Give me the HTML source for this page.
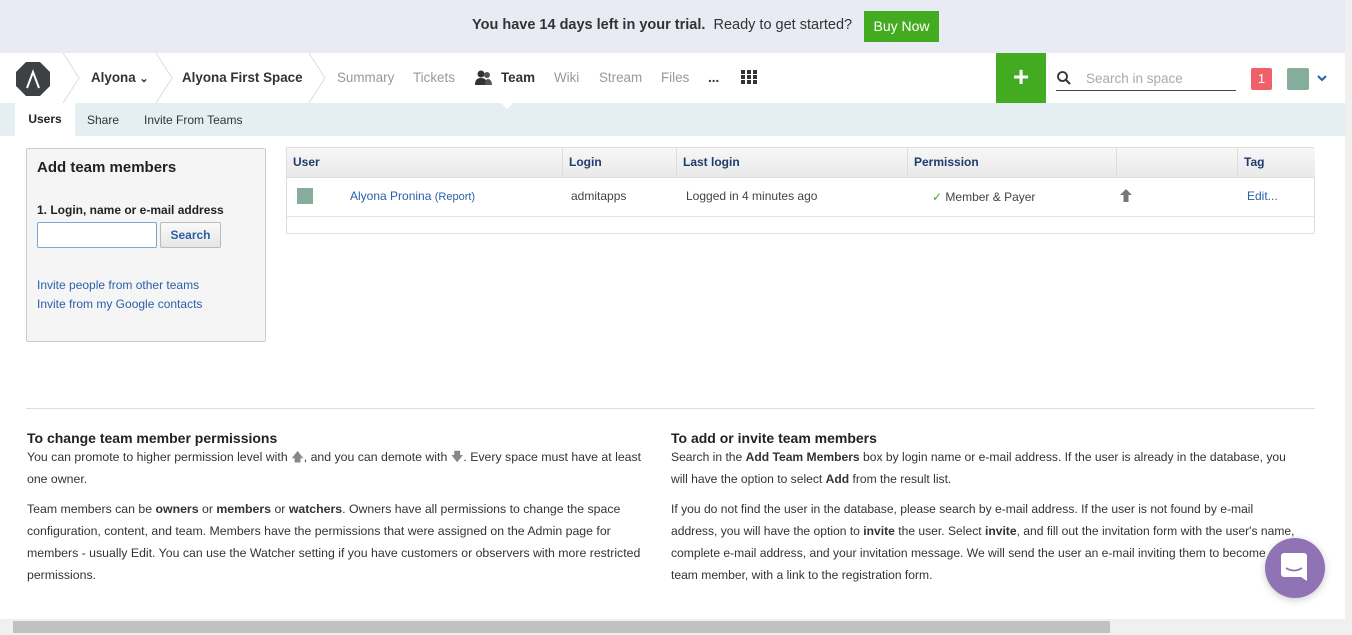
<!DOCTYPE html>
<html><head><meta charset="utf-8"><style>
*{box-sizing:border-box;margin:0;padding:0}
body{width:1352px;height:635px;overflow:hidden;font-family:"Liberation Sans",Arial,sans-serif;background:#fff;position:relative;color:#333}
.abs{position:absolute}
.trial{left:0;top:0;width:1345px;height:53px;background:#e8eaf4;font-size:14.5px;color:#333}
.nav{left:0;top:53px;width:1345px;height:50px;background:#fff}
.sub{left:0;top:103px;width:1345px;height:33px;background:#e5eef0}
.navlink{position:absolute;top:17px;font-size:13.4px;color:#999}
a{color:#2a5fa8;text-decoration:none}
.box{left:26px;top:148px;width:240px;height:194px;background:#f5f5f5;border:1px solid #ccc;border-radius:2px}
.tbl{left:286px;top:147px;width:1029px;height:87px;border:1px solid #ddd;border-radius:2px}
.th{position:absolute;top:0;height:29px;background:linear-gradient(#f7f7f7,#e9e9e9);border-right:1px solid #ddd;font-size:12px;font-weight:bold;color:#1e3c6e;padding:7px 6px}
.td{position:absolute;top:41px;font-size:12px;color:#444}
.p{font-size:12.3px;line-height:22px;color:#333}
.r .p{font-size:12.1px}
h3{font-size:14px;color:#222}
</style></head><body>
<div class="abs trial">
<div class="abs" style="left:472px;top:17px"><b>You have 14 days left in your trial.</b>&nbsp; Ready to get started?</div>
<div class="abs" style="left:864px;top:11px;width:75px;height:31px;background:#43ab1f;color:#fff;font-size:14px;text-align:center;line-height:31px">Buy Now</div>
</div>
<div class="abs nav">
<svg class="abs" style="left:15px;top:8px" width="36" height="36" viewBox="0 0 36 36"><path d="M11 1h14l10 10v14l-10 10H11L1 25V11z" fill="#3e4143"/><path d="M12 27L18 11l6 16" stroke="#fff" stroke-width="2" fill="none"/></svg>
<svg class="abs" style="left:62px;top:0" width="20" height="50"><path d="M1 0l16 25L1 50" stroke="#ddd" fill="none"/></svg>
<div class="navlink" style="left:91px;color:#333;font-weight:bold">Alyona <span style="font-size:11px">&#8964;</span></div>
<svg class="abs" style="left:155px;top:0" width="20" height="50"><path d="M1 0l16 25L1 50" stroke="#ddd" fill="none"/></svg>
<div class="navlink" style="left:182px;color:#333;font-weight:bold">Alyona First Space</div>
<svg class="abs" style="left:308px;top:0" width="20" height="50"><path d="M1 0l16 25L1 50" stroke="#ddd" fill="none"/></svg>
<div class="navlink" style="left:337px">Summary</div>
<div class="navlink" style="left:413px">Tickets</div>
<svg class="abs" style="left:475px;top:17px" width="18" height="16" viewBox="0 0 18 16"><circle cx="6" cy="4" r="3.5" fill="#333"/><path d="M0 15c0-5 2-7 6-7s6 2 6 7z" fill="#333"/><circle cx="12" cy="5" r="3" fill="#555"/><path d="M10 15c0-4 1-6 3-6s4 2 4 6z" fill="#555"/></svg>
<div class="navlink" style="left:501px;color:#333;font-weight:bold">Team</div>
<div class="navlink" style="left:554px">Wiki</div>
<div class="navlink" style="left:599px">Stream</div>
<div class="navlink" style="left:661px">Files</div>
<div class="navlink" style="left:708px;color:#333;font-weight:bold">...</div>
<svg class="abs" style="left:741px;top:17px" width="16" height="14"><g fill="#333"><rect x="0" y="0" width="4" height="4"/><rect x="6" y="0" width="4" height="4"/><rect x="12" y="0" width="4" height="4"/><rect x="0" y="5" width="4" height="4"/><rect x="6" y="5" width="4" height="4"/><rect x="12" y="5" width="4" height="4"/><rect x="0" y="10" width="4" height="4"/><rect x="6" y="10" width="4" height="4"/><rect x="12" y="10" width="4" height="4"/></g></svg>
<div class="abs" style="left:996px;top:0;width:50px;height:50px;background:#43ab1f;color:#fff;font-size:28px;font-weight:bold;text-align:center;line-height:48px">+</div>
<svg class="abs" style="left:1057px;top:18px" width="14" height="14"><circle cx="5.5" cy="5.5" r="4.5" stroke="#333" stroke-width="1.8" fill="none"/><path d="M9 9l4 4" stroke="#333" stroke-width="2"/></svg>
<div class="abs" style="left:1086px;top:18px;font-size:13.5px;color:#aaa">Search in space</div>
<div class="abs" style="left:1056px;top:37px;width:180px;height:1px;background:#444"></div>
<div class="abs" style="left:1251px;top:15px;width:21px;height:22px;background:#f0606a;border-radius:2px;color:#fff;font-size:13px;text-align:center;line-height:22px">1</div>
<div class="abs" style="left:1287px;top:15px;width:22px;height:22px;background:#86ad9b;border-radius:2px"></div>
<svg class="abs" style="left:1317px;top:22px" width="10" height="7"><path d="M1 1l4 4 4-4" stroke="#2a5fa8" stroke-width="2" fill="none"/></svg>
</div>
<div class="abs sub">
<div class="abs" style="left:15px;top:0;width:60px;height:33px;background:#fff;font-size:12px;font-weight:bold;color:#222;text-align:center;line-height:33px">Users</div>
<div class="abs" style="left:87px;top:10px;font-size:12px;color:#333">Share</div>
<div class="abs" style="left:144px;top:10px;font-size:12px;color:#333">Invite From Teams</div>
<div class="abs" style="left:501px;top:0;width:0;height:0;border:6px solid transparent;border-top-color:#fff"></div>
</div>
<div class="abs box">
<div class="abs" style="left:10px;top:10px;font-size:15px;font-weight:bold;color:#222">Add team members</div>
<div class="abs" style="left:10px;top:54px;font-size:12px;font-weight:bold;color:#222">1. Login, name or e-mail address</div>
<div class="abs" style="left:10px;top:73px;width:120px;height:26px;background:#fff;border:1px solid #7aa7d6;border-radius:2px"></div>
<div class="abs" style="left:133px;top:73px;width:61px;height:26px;background:linear-gradient(#fafafa,#e6e6e6);border:1px solid #bbb;border-radius:2px;font-size:12px;font-weight:bold;color:#2a5fa8;text-align:center;line-height:24px">Search</div>
<div class="abs" style="left:10px;top:129px;font-size:12px"><a>Invite people from other teams</a></div>
<div class="abs" style="left:10px;top:148px;font-size:12px"><a>Invite from my Google contacts</a></div>
</div>
<div class="abs tbl">
<div class="th" style="left:0;width:276px">User</div>
<div class="th" style="left:276px;width:114px">Login</div>
<div class="th" style="left:390px;width:231px">Last login</div>
<div class="th" style="left:621px;width:209px">Permission</div>
<div class="th" style="left:830px;width:121px"></div>
<div class="th" style="left:951px;width:77px;border-right:0">Tag</div>
<div class="abs" style="left:0;top:29px;width:1028px;height:1px;background:#ddd"></div>
<div class="abs" style="left:10px;top:40px;width:16px;height:16px;background:#86ad9b"></div>
<div class="td" style="left:63px"><a style="font-size:12px">Alyona Pronina</a> <span style="font-size:11px;color:#2a5fa8">(Report)</span></div>
<div class="td" style="left:284px">admitapps</div>
<div class="td" style="left:399px">Logged in 4 minutes ago</div>
<div class="td" style="left:645px;top:42px"><span style="color:#43ab1f">&#10003;</span> Member &amp; Payer</div>
<svg class="abs" style="left:833px;top:41px" width="12" height="13"><path d="M6 0L0 6h3.5v7h5V6H12z" fill="#777"/></svg>
<div class="td" style="left:960px"><a>Edit...</a></div>
<div class="abs" style="left:0;top:68px;width:1028px;height:1px;background:#e4e4e4"></div>
</div>
<div class="abs" style="left:26px;top:408px;width:1289px;height:1px;background:#ddd"></div>
<div class="abs" style="left:27px;top:430px;width:625px">
<h3>To change team member permissions</h3>
<p class="p">You can promote to higher permission level with <span style="color:#888">&#129093;</span>, and you can demote with <span style="color:#888">&#129095;</span>. Every space must have at least one owner.</p>
<p class="p" style="margin-top:8px">Team members can be <b>owners</b> or <b>members</b> or <b>watchers</b>. Owners have all permissions to change the space configuration, content, and team. Members have the permissions that were assigned on the Admin page for members - usually Edit. You can use the Watcher setting if you have customers or observers with more restricted permissions.</p>
</div>
<div class="abs r" style="left:671px;top:430px;width:628px">
<h3>To add or invite team members</h3>
<p class="p">Search in the <b>Add Team Members</b> box by login name or e-mail address. If the user is already in the database, you will have the option to select <b>Add</b> from the result list.</p>
<p class="p" style="margin-top:8px">If you do not find the user in the database, please search by e-mail address. If the user is not found by e-mail address, you will have the option to <b>invite</b> the user. Select <b>invite</b>, and fill out the invitation form with the user's name, complete e-mail address, and your invitation message. We will send the user an e-mail inviting them to become a team member, with a link to the registration form.</p>
</div>
<div class="abs" style="left:1265px;top:538px;width:60px;height:60px;border-radius:50%;background:#8f73b4;box-shadow:0 2px 8px rgba(0,0,0,.2)">
<svg class="abs" style="left:16px;top:15px" width="28" height="30"><path d="M3 0h20a3 3 0 0 1 3 3v25l-6-4H3a3 3 0 0 1-3-3V3a3 3 0 0 1 3-3z" fill="#fff"/><path d="M5 15q8 5 16 0" stroke="#8f73b4" stroke-width="1.8" fill="none"/></svg>
</div>
<div class="abs" style="left:1345px;top:0;width:7px;height:619px;background:#f0f0f0"></div>
<div class="abs" style="left:0;top:619px;width:1352px;height:16px;background:#f0f0f0"></div>
<div class="abs" style="left:13px;top:621px;width:1097px;height:12px;background:#c1c1c1"></div>
</body></html>
